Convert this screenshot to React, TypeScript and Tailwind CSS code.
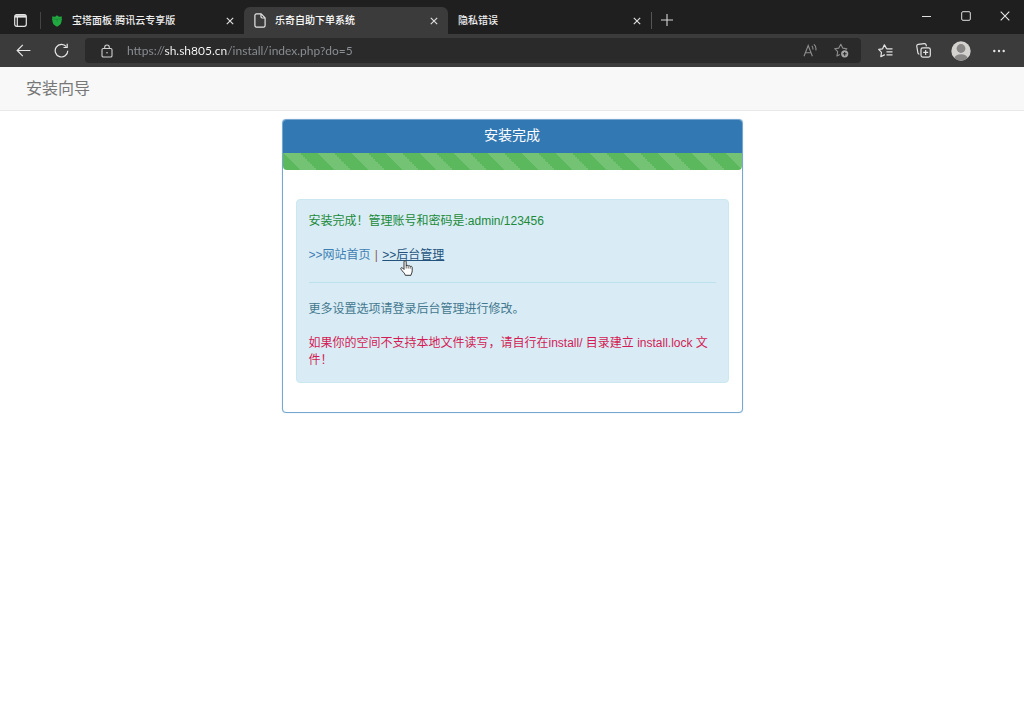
import React from 'react';

const tabs = [
  { id: 'panel', title: '宝塔面板·腾讯云专享版', icon: 'shield', active: false },
  { id: 'install', title: '乐奇自助下单系统', icon: 'page', active: true },
  { id: 'privacy', title: '隐私错误', icon: '', active: false },
];

const ShieldIcon = () => (
  <svg className="w-3 h-3 shrink-0" viewBox="0 0 12 12">
    <path d="M6 .2 7.800 1.700 11 1.600l-.4 2 .6.9-.6.8c.2 3-1.600 5.200-4.600 6.500C3 10.500 1.200 8.300 1.400 5.300l-.6-.8.600-.9-.4-2 3.200.1z" fill="#22a840" />
    <path d="M1.400 4.100h9.200M6 4.300v2.500" stroke="#168035" strokeWidth=".6" fill="none" />
  </svg>
);

const PageIcon = () => (
  <svg className="w-3 h-[15px] shrink-0" viewBox="0 0 12 15" fill="none" stroke="#e6e6e6" strokeWidth="1.2" strokeLinejoin="round">
    <path d="M2.500.900h4.700l3.900 3.900v7.700a1.600 1.600 0 0 1-1.600 1.600h-7a1.600 1.600 0 0 1-1.600-1.600v-10A1.600 1.600 0 0 1 2.500.900z" />
    <path d="M7 1v2.800c0 .8.400 1.200 1.200 1.200H11" />
  </svg>
);

const CloseIcon = () => (
  <svg className="w-2 h-2" viewBox="0 0 8 8" stroke="#dcdcdc" strokeWidth="1.200">
    <path d="M.8.8l6.400 6.400M7.200.8.8 7.200" />
  </svg>
);

// White hand cursor resting on the admin link
const HandCursor = () => (
  <svg className="absolute left-[18px] top-3 w-[13px] h-4 pointer-events-none" viewBox="0 0 13 16">
    <path
      d="M4 9.500V1.800C4 .3 6.200.3 6.200 1.800V6c.1-1 2-.9 2 .2.200-.9 2-.7 2 .5.300-.8 2-.5 2 .8v3.300c0 2-.9 2.600-1.200 4.500H5.300C5 13.300 2.300 11.400 1 9.200.300 8 1.600 7.100 2.600 8z"
      fill="#fff"
      stroke="#222"
      strokeWidth=".9"
      strokeLinejoin="round"
    />
    <path d="M6.200 6v2.500M8.200 6.500v2M10.200 7v1.700" stroke="#222" strokeWidth=".7" />
  </svg>
);

const TitleBar = () => (
  <div className="flex h-[34px] bg-[#1f1f1f]">
    <button aria-label="Tab actions" className="flex w-10 shrink-0 items-center justify-center pt-1.5">
      <svg className="w-[13px] h-[13px]" viewBox="0 0 13 13" fill="none" stroke="#e4e4e4" strokeWidth="1.200">
        <rect x=".7" y=".7" width="11.600" height="11.600" rx="2" />
        <path d="M1 2.400h11" strokeWidth="2.400" />
        <path d="M3.300 3v9" />
      </svg>
    </button>
    <div className="mt-3 h-[17px] w-px shrink-0 bg-[#444]" />
    <div className="flex min-w-0 items-end">
      {tabs.map((t) => (
        <div
          key={t.id}
          className={
            t.active
              ? 'flex h-[27px] w-[204px] min-w-0 items-center gap-[9px] rounded-t-md bg-[#3b3b3b] px-2.5 text-white'
              : 'flex h-[27px] w-[203px] min-w-0 items-center gap-[9px] px-2.5 text-[#f0f0f0]'
          }
        >
          {t.icon === 'shield' && <ShieldIcon />}
          {t.icon === 'page' && <PageIcon />}
          <span className="flex-1 truncate text-[10px] leading-4 font-medium">{t.title}</span>
          <button aria-label="Close tab">
            <CloseIcon />
          </button>
        </div>
      ))}
    </div>
    <div className="mt-3 h-[17px] w-px shrink-0 bg-[#555]" />
    <button aria-label="New tab" className="flex w-[30px] items-center justify-center pt-1.5">
      <svg className="w-3 h-3" viewBox="0 0 12 12" stroke="#d6d6d6" strokeWidth="1.100">
        <path d="M6 0v12M0 6h12" />
      </svg>
    </button>
    <div className="ml-auto flex pb-0.5">
      <button aria-label="Minimize" className="flex w-[39px] items-center justify-center">
        <svg className="w-[9px] h-[9px]" viewBox="0 0 9 9" stroke="#e0e0e0">
          <path d="M0 4.500h9" />
        </svg>
      </button>
      <button aria-label="Maximize" className="flex w-[39px] items-center justify-center">
        <svg className="w-[10px] h-[10px]" viewBox="0 0 10 10" fill="none" stroke="#e0e0e0">
          <rect x=".7" y=".7" width="8.600" height="8.600" rx="1.200" />
        </svg>
      </button>
      <button aria-label="Close window" className="flex w-[39px] items-center justify-center">
        <svg className="w-[10px] h-[10px]" viewBox="0 0 10 10" stroke="#e8e8e8" strokeWidth="1.100">
          <path d="M.7.7l8.600 8.600M9.300.7.7 9.300" />
        </svg>
      </button>
    </div>
  </div>
);

const ToolBar = () => (
  <div className="flex h-[33px] items-center bg-[#3b3b3b] pl-[5px] pr-1.5">
    <button aria-label="Back" className="flex w-[37px] shrink-0 justify-center">
      <svg className="w-[15px] h-[13px]" viewBox="0 0 15 13" fill="none" stroke="#e6e6e6" strokeWidth="1.200">
        <path d="M6.800.9 1.200 6.500l5.600 5.600M1.400 6.500h13" />
      </svg>
    </button>
    <button aria-label="Refresh" className="flex w-[38px] shrink-0 justify-center">
      <svg className="w-[15px] h-[15px]" viewBox="0 0 15 15" fill="none" stroke="#e6e6e6" strokeWidth="1.200">
        <path d="M13.800 7.800A6.300 6.300 0 1 1 12.400 3.700" />
        <path d="M13.200.8v3.700H9.500" />
      </svg>
    </button>
    <div className="mx-[5px] flex h-[25px] min-w-0 flex-1 items-center rounded bg-[#2a2a2a] pl-4 pr-3">
      <svg className="mr-3.5 w-3 h-[14px] shrink-0" viewBox="0 0 12 14" fill="none" stroke="#d0d0d0" strokeWidth="1.100">
        <rect x="1" y="4.500" width="10" height="8.500" rx="1.300" />
        <path d="M3.700 4.500V3.300a2.300 2.300 0 0 1 4.600 0v1.200" />
        <circle cx="6" cy="8.800" r=".8" fill="#d0d0d0" stroke="none" />
      </svg>
      {/* host is brighter than the scheme and the path */}
      <input
        aria-label="Address"
        type="text"
        defaultValue="https://sh.sh805.cn/install/index.php?do=5"
        className="min-w-0 flex-1 bg-[linear-gradient(90deg,#8c9196_38px,#fff_38px,#fff_101px,#8c9196_101px)] bg-clip-text text-xs text-transparent outline-none font-[Lato,'Noto_Sans',sans-serif]"
      />
      <div className="flex shrink-0 items-center gap-4">
        <button aria-label="Read aloud">
          <svg className="w-[15px] h-[13px]" viewBox="0 0 15 13" fill="none" stroke="#8e8e8e" strokeWidth="1.100">
            <path d="M1 12.200 5.200 1.500l4.200 10.700M2.400 8.700H8" />
            <path d="M8.800 1.900c1 .9 1.300 2.100 1.100 3.600M10.900.400c1.800 1.400 2.400 3.500 1.900 6" />
          </svg>
        </button>
        <button aria-label="Add to favorites">
          <svg className="w-[15px] h-[15px]" viewBox="0 0 15 15" fill="none" stroke="#8e8e8e" strokeWidth="1.100" strokeLinejoin="round">
            <path d="M5.800 11.500 2.900 13l.8-4.300L.7 5.700l4.100-.6L6.800 1.200l1.900 3.900 4.200.6-1.200 1.200" />
            <circle cx="10.700" cy="10.800" r="3.600" fill="#a6a6a6" stroke="none" />
            <path d="M10.700 8.900v3.800M8.800 10.800h3.800" stroke="#2a2a2a" />
          </svg>
        </button>
      </div>
    </div>
    <button aria-label="Favorites" className="flex w-[38px] shrink-0 justify-center">
      <svg className="w-[15px] h-[14px]" viewBox="0 0 15 14" fill="none" stroke="#e4e4e4" strokeWidth="1.200" strokeLinejoin="round">
        <path d="M8.700 4.900 6.400.8 4.600 4.800.7 5.400l2.800 2.900-.7 4.400 4-2.100" />
        <path d="M8.500 4.900H14.500M8.500 7.900H14.500M8.500 10.900H14.500" />
      </svg>
    </button>
    <button aria-label="Collections" className="flex w-[38px] shrink-0 justify-center">
      <svg className="w-[15px] h-[15px]" viewBox="0 0 15 15" fill="none" stroke="#e4e4e4" strokeWidth="1.200" strokeLinejoin="round">
        <rect x="5" y="4.800" width="9.300" height="9.300" rx="1.800" />
        <path d="M9.650 7v5M7.200 9.450h5" />
        <path d="M3.300 11.200c-.9 0-1.300-.5-1.400-1.300L.8 3.500C.6 2.400 1.200 1.600 2.200 1.400l6-.7c1-.1 1.800.5 2 1.500l.2 1.100" />
      </svg>
    </button>
    <button aria-label="Profile" className="flex w-[38px] shrink-0 justify-center">
      <svg className="w-5 h-5" viewBox="0 0 20 20">
        <clipPath id="avatar">
          <circle cx="10" cy="10" r="9.700" />
        </clipPath>
        <circle cx="10" cy="10" r="9.700" fill="#d4d2cf" />
        <g clipPath="url(#avatar)" fill="#898785">
          <circle cx="10" cy="7.500" r="4.400" />
          <ellipse cx="10" cy="17.600" rx="6.800" ry="4.300" />
        </g>
      </svg>
    </button>
    <button aria-label="Settings and more" className="flex w-[38px] shrink-0 justify-center">
      <svg className="w-3 h-3" viewBox="0 0 12 12" fill="#e4e4e4">
        <circle cx="1.300" cy="6" r="1.200" />
        <circle cx="6" cy="6" r="1.200" />
        <circle cx="10.700" cy="6" r="1.200" />
      </svg>
    </button>
  </div>
);

const InstallCard = () => (
  <div className="mx-auto mt-2 w-full max-w-[461px] overflow-hidden rounded border border-[#75a7cf] bg-white shadow-[0_0_1px_#9cc4e4]">
    <h3 className="bg-[#3278b3] pt-[5px] pb-[7px] text-center text-sm leading-[21px] text-white">安装完成</h3>
    <div
      role="progressbar"
      aria-label="安装完成"
      aria-valuenow={100}
      className="h-[17px] rounded-b-sm bg-[#5cb85c] bg-[linear-gradient(45deg,rgba(255,255,255,.15)_25%,transparent_25%,transparent_50%,rgba(255,255,255,.15)_50%,rgba(255,255,255,.15)_75%,transparent_75%,transparent)] bg-size-[34px_34px]"
    />
    <div className="mx-[13px] my-[29px] rounded border border-[#cbe8f0] bg-[#d9ecf5] px-3 py-[13px] text-xs leading-[17px] text-[#44788f]">
      <p className="mb-[17px] text-[#208a38]">安装完成！管理账号和密码是:admin/123456</p>
      <p>
        <a href="#home" className="text-[#3d7eb3]">&gt;&gt;网站首页</a>
        <span className="mx-px text-[#8a5a5a]"> | </span>
        <a href="#admin" className="relative text-[#23527c] underline">
          &gt;&gt;后台管理
          <HandCursor />
        </a>
      </p>
      <hr className="my-[18px] border-[#bce1ea]" />
      <p className="mb-[17px]">更多设置选项请登录后台管理进行修改。</p>
      <p className="text-[#d31b54]">如果你的空间不支持本地文件读写，请自行在install/ 目录建立 install.lock 文件！</p>
    </div>
  </div>
);

const App: React.FC = () => {
  return (
    <div className="min-h-screen bg-white font-['Liberation_Sans','Noto_Sans_CJK_SC',sans-serif]" lang="zh-CN">
      <header>
        <TitleBar />
        <ToolBar />
      </header>
      <nav className="flex h-11 items-center border-b border-[#e9e9e9] bg-[#f8f8f8] px-[26px]">
        <a href="#guide" className="text-base text-[#777]">安装向导</a>
      </nav>
      <main>
        <InstallCard />
      </main>
    </div>
  );
};

export default App;
